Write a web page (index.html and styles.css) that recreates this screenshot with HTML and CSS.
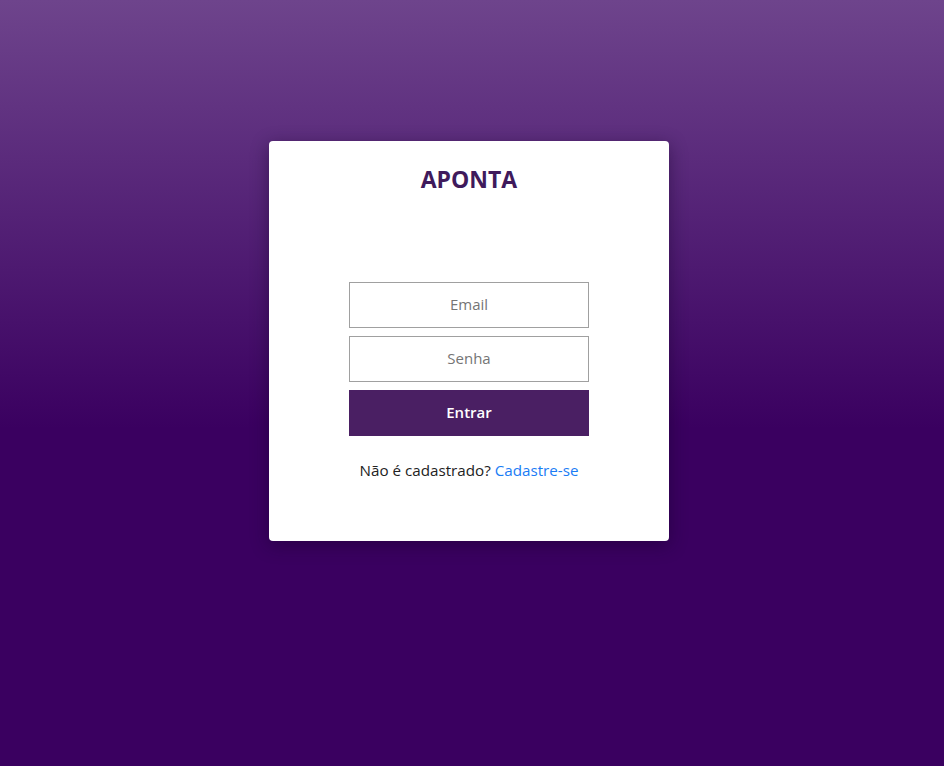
FILE: index.html
```html
<!DOCTYPE html>
<html lang="pt-BR">
<head>
<meta charset="utf-8">
<title>Aponta</title>
<link rel="stylesheet" href="styles.css">
</head>
<body>
<main class="page">
  <section class="card">
    <h1 class="brand">APONTA</h1>
    <form class="form">
      <input class="field" type="email" placeholder="Email">
      <input class="field" type="password" placeholder="Senha">
      <button class="submit" type="button">Entrar</button>
    </form>
    <p class="signup">Não é cadastrado? <a href="#" class="link">Cadastre-se</a></p>
  </section>
</main>
</body>
</html>
```

FILE: styles.css
```css
* { box-sizing: border-box; }
html, body { margin: 0; height: 100%; }
body {
  font-family: "Open Sans", "Liberation Sans", sans-serif;
  background: linear-gradient(to bottom, #6e448c 0%, #3a0060 56%, #3a0060 100%);
  min-height: 766px;
}
.page {
  display: flex;
  justify-content: center;
  padding-top: 141px;
  padding-right: 6px;
}
.card {
  width: 400px;
  height: 400px;
  background: #fff;
  border-radius: 4px;
  box-shadow: 0 4px 18px rgba(20, 0, 40, 0.45);
  display: flex;
  flex-direction: column;
  align-items: center;
  padding-top: 24px;
}
.brand {
  margin: 0;
  font-size: 23px;
  font-weight: 700;
  color: #3f1a5c;
  line-height: 28px;
  letter-spacing: 0;
}
.form {
  margin-top: 89px;
  display: flex;
  flex-direction: column;
  gap: 8px;
  width: 240px;
}
.field {
  height: 46px;
  border: 1px solid #a0a0a0;
  background: #fff;
  text-align: center;
  font-family: inherit;
  font-size: 15px;
  color: #333;
  outline: none;
  padding: 0 0 3px;
}
.field::placeholder { color: #757575; }
.submit {
  height: 46px;
  border: none;
  background: #4a1f63;
  color: #fff;
  font-family: inherit;
  font-size: 15px;
  font-weight: 600;
  padding: 0 0 3px;
}
.signup {
  margin: 23px 0 0;
  font-size: 15.2px;
  color: #222;
  line-height: 22px;
}
.link {
  color: #1a7cf5;
  text-decoration: none;
}
```
